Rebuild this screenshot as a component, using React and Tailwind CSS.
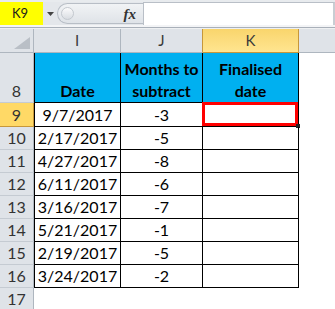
import React from "react";

const data = [
  ["9", "9/7/2017", "-3"],
  ["10", "2/17/2017", "-5"],
  ["11", "4/27/2017", "-8"],
  ["12", "6/11/2017", "-6"],
  ["13", "3/16/2017", "-7"],
  ["14", "5/21/2017", "-1"],
  ["15", "2/19/2017", "-5"],
  ["16", "3/24/2017", "-2"],
];

export default function App() {
  return (
    <div className="w-[335px] h-[309px] overflow-hidden bg-white font-['Lato',sans-serif] text-black">
      {/* formula bar */}
      <div className="flex flex-col bg-[#e4e7eb]">
        <div className="h-[2px] bg-[#e8ebee]" />
        <div className="h-[23px] flex">
          <div className="w-[43px] bg-[#ffff00] flex items-center pl-[12px] text-[13px] text-[#1a1a1a]">K9</div>
          <div className="w-[14px] flex items-center justify-center">
            <svg width="7" height="4" viewBox="0 0 7 4"><path d="M0 0h7L3.5 4z" fill="#444" /></svg>
          </div>
          <div className="w-[86px] h-[21px] mt-[1px] rounded-l-full border border-r-0 border-[#b8bec6] bg-gradient-to-b from-[#f1f3f5] to-[#dfe3e8] flex items-center relative">
            <div className="ml-[3px] w-[13px] h-[13px] rounded-full border border-[#c3c8ce] bg-gradient-to-b from-[#fbfbfc] to-[#d9dde2]" />
            <div className="absolute right-[7px] top-[2px] font-['Liberation_Serif',serif] italic font-bold text-[15px] text-[#333] leading-[16px]">fx</div>
          </div>
          <div className="flex-1 bg-white border-t border-l border-[#b9bfc7] border-r-[2px] border-r-[#c8cdd3]" />
        </div>
        <div className="h-[2px] bg-[#f3f4f6]" />
        <div className="h-px bg-[#a9b0b9]" />
        <div className="h-px bg-[#eef0f2]" />
      </div>

      {/* sheet */}
      <div className="grid grid-cols-[34px_87px_82px_96px_1fr]">
        {/* column header row */}
        <div className="h-[24px] bg-[#dfe3e8] border-r border-b border-[#aeb6bf] flex items-end justify-end pr-[3px] pb-[3px]">
          <svg width="16" height="12" viewBox="0 0 16 12"><path d="M16 0V12H0z" fill="#b9bfc6" /></svg>
        </div>
        <div className="h-[24px] bg-[#dfe3e8] border-r border-b border-[#aeb6bf] flex items-center justify-center text-[15px] text-[#3a3a3a]">I</div>
        <div className="h-[24px] bg-[#dfe3e8] border-r border-b border-[#aeb6bf] border-r-[#c7973a] flex items-center justify-center text-[15px] text-[#3a3a3a]">J</div>
        <div className="h-[24px] bg-gradient-to-b from-[#f9d56c] to-[#ffe590] border-r border-b border-[#c7973a] flex items-center justify-center text-[15px] text-[#3a3a3a]">K</div>
        <div className="h-[24px] bg-[#dfe3e8] border-b border-[#aeb6bf]" />

        {/* row 8 */}
        <div className="h-[50px] bg-[#dfe3e8] border-r border-b border-[#aeb6bf] border-b-[#c5cbd2] flex items-end justify-center text-[16px] leading-[22px] text-[#333]">8</div>
        <div className="h-[50px] bg-[#00b0f0] border-l border-r border-b border-black flex flex-col items-center justify-end text-[16px] leading-[22px] font-bold">Date</div>
        <div className="h-[50px] bg-[#00b0f0] border-r border-b border-black flex flex-col items-center justify-end text-[16px] leading-[22px] font-bold text-center">
          <span>Months to</span>
          <span>subtract</span>
        </div>
        <div className="h-[50px] bg-[#00b0f0] border-r border-b border-black flex flex-col items-center justify-end text-[16px] leading-[22px] font-bold text-center">
          <span>Finalised</span>
          <span>date</span>
        </div>
        <div className="h-[50px]" />

        {data.map(([n, d, m], i) => {
          const h = i === 0 ? "h-[24px]" : "h-[23px]";
          const sel = i === 0;
          return (
            <React.Fragment key={n}>
              <div
                className={`${h} border-r border-b flex items-center justify-center text-[16px] text-[#333] ${
                  sel ? "bg-[#ffd966] border-[#c7973a]" : "bg-[#dfe3e8] border-[#aeb6bf] border-b-[#c5cbd2]"
                }`}
              >
                {n}
              </div>
              <div className={`${h} border-l border-r border-b border-black flex items-center justify-center text-[16px]`}>{d}</div>
              <div className={`${h} border-r border-b border-black flex items-center justify-center text-[16px]`}>{m}</div>
              <div className={`${h} border-r border-b border-black relative`}>
                {sel && (
                  <>
                    <div className="absolute -top-px -left-px right-0 bottom-0 border-[3px] border-[#ff0000]" />
                    <div className="absolute -right-[2px] -bottom-[2px] w-[4px] h-[4px] bg-[#222]" />
                  </>
                )}
              </div>
              <div className={h} />
            </React.Fragment>
          );
        })}

        {/* row 17 */}
        <div className="h-[23px] bg-[#dfe3e8] border-r border-b border-[#aeb6bf] border-b-[#c5cbd2] flex items-center justify-center text-[16px] text-[#333]">17</div>
        <div className="h-[23px]" />
        <div className="h-[23px]" />
        <div className="h-[23px]" />
        <div className="h-[23px]" />
      </div>
    </div>
  );
}
